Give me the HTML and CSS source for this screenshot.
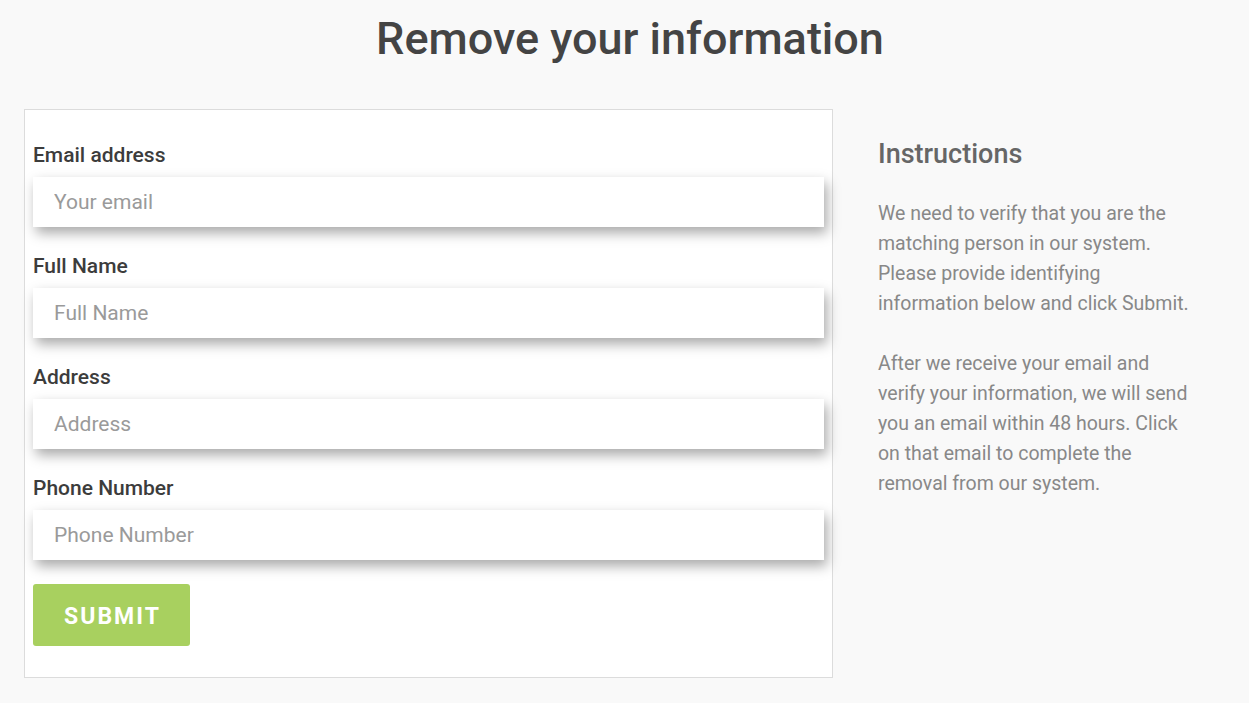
FILE: index.html
```html
<!DOCTYPE html>
<html lang="en">
<head>
<meta charset="utf-8">
<title>Remove your information</title>
<link rel="stylesheet" href="styles.css">
</head>
<body>
<div class="page">
  <h1 class="title">Remove your information</h1>
  <div class="layout">
    <form class="card" onsubmit="return false;">
      <label class="label" for="email">Email address</label>
      <input class="field" id="email" type="text" placeholder="Your email">
      <label class="label" for="name">Full Name</label>
      <input class="field" id="name" type="text" placeholder="Full Name">
      <label class="label" for="address">Address</label>
      <input class="field" id="address" type="text" placeholder="Address">
      <label class="label" for="phone">Phone Number</label>
      <input class="field" id="phone" type="text" placeholder="Phone Number">
      <button class="submit" type="submit">SUBMIT</button>
    </form>
    <aside class="instructions">
      <h3 class="inst-title">Instructions</h3>
      <p class="inst-text">We need to verify that you are the matching person in our system. Please provide identifying information below and click Submit.</p>
      <p class="inst-text">After we receive your email and verify your information, we will send you an email within 48 hours. Click on that email to complete the removal from our system.</p>
    </aside>
  </div>
</div>
</body>
</html>
```

FILE: styles.css
```css
* { box-sizing: border-box; }
html, body {
  margin: 0;
  padding: 0;
  background: #f9f9f9;
  font-family: Roboto, "Liberation Sans", Arial, sans-serif;
}
.page {
  padding: 0 13px 0 24px;
}
.title {
  margin: 14px 0 0;
  text-align: center;
  font-size: 45px;
  line-height: 49px;
  font-weight: 500;
  color: #444;
}
.layout {
  display: flex;
  align-items: flex-start;
  gap: 45px;
  margin-top: 46px;
}
.card {
  width: 809px;
  flex: 0 0 809px;
  background: #fff;
  border: 1px solid #dcdcdc;
  padding: 34px 8px 31px 8px;
  display: flex;
  flex-direction: column;
  align-items: flex-start;
}
.label {
  display: block;
  font-size: 21px;
  line-height: 22px;
  font-weight: 500;
  color: #3c3c3c;
  margin-bottom: 11px;
}
.field {
  display: block;
  width: 100%;
  height: 50px;
  border: none;
  outline: none;
  background: #fff;
  padding: 0 21px;
  font-family: Roboto, "Liberation Sans", Arial, sans-serif;
  font-size: 21px;
  color: #333;
  box-shadow: 3px 6px 12px rgba(0, 0, 0, 0.34);
  margin-bottom: 28px;
}
.field::placeholder { color: #9a9a9a; }
.field:last-of-type { margin-bottom: 24px; }
.submit {
  width: 157px;
  height: 62px;
  border: none;
  border-radius: 3px;
  background: #a8d05f;
  color: #fff;
  font-family: Roboto, "Liberation Sans", Arial, sans-serif;
  font-size: 23px;
  font-weight: 700;
  letter-spacing: 2px;
  padding: 2px 0 0 2px;
  cursor: pointer;
}
.instructions {
  width: 322px;
  padding-top: 30px;
}
.inst-title {
  margin: 0 0 30px;
  font-size: 27px;
  line-height: 30px;
  font-weight: 500;
  color: #666;
}
.inst-text {
  margin: 0 0 30px;
  font-size: 19.5px;
  line-height: 30px;
  color: #888;
}
```
